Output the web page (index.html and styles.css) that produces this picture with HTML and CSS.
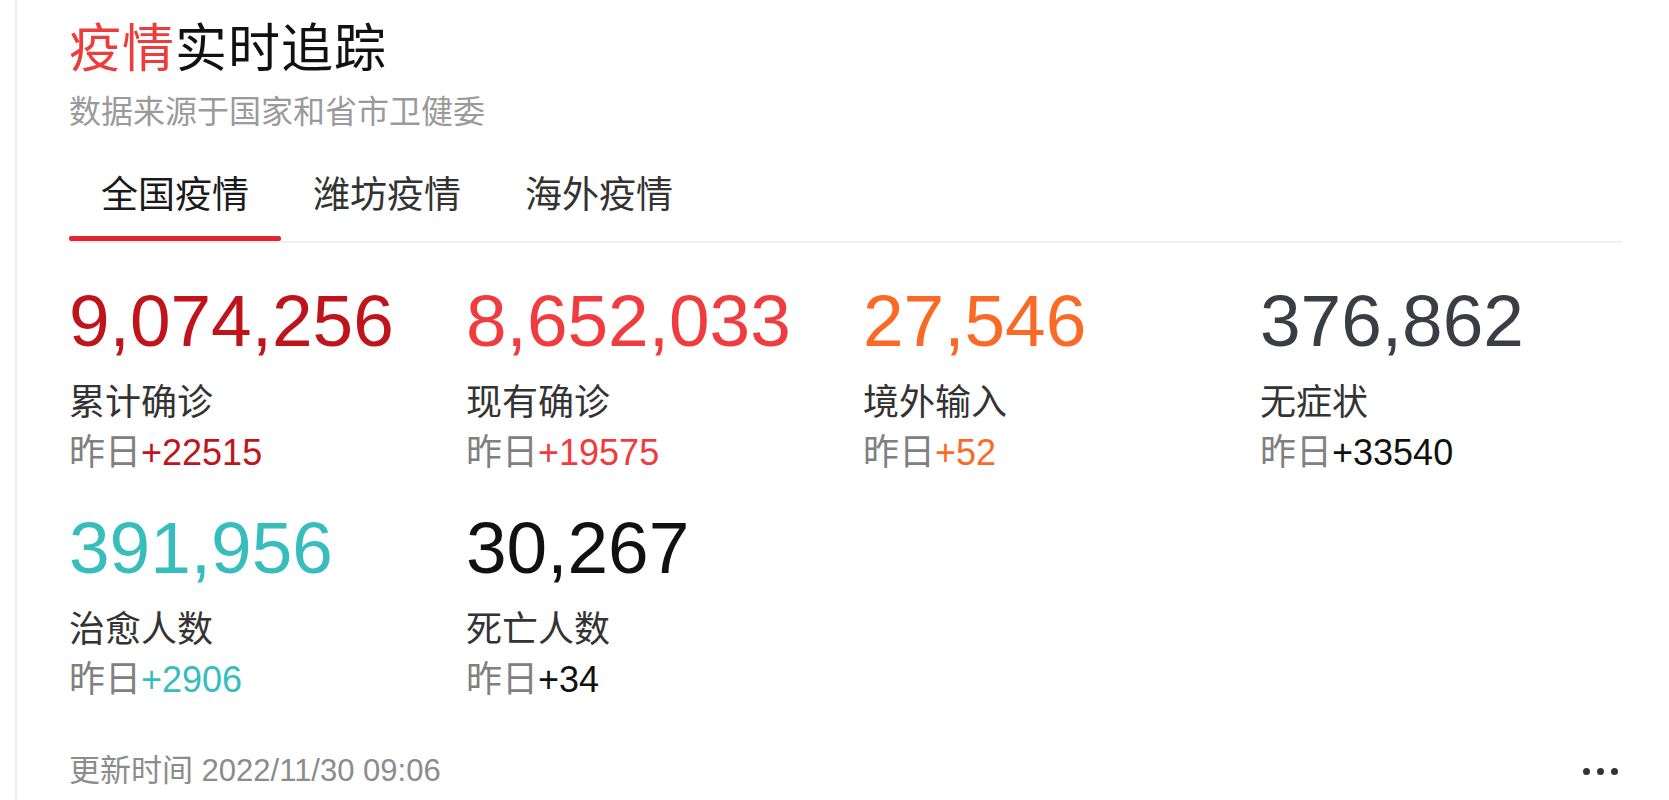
FILE: index.html
```html
<!DOCTYPE html>
<html lang="zh-CN">
<head>
<meta charset="utf-8">
<title>疫情实时追踪</title>
<link rel="stylesheet" href="styles.css">
</head>
<body>
<div class="page">
  <h1 class="title"><span class="hl">疫情</span>实时追踪</h1>
  <p class="subtitle">数据来源于国家和省市卫健委</p>
  <nav class="tabs">
    <a class="tab active">全国疫情</a>
    <a class="tab">潍坊疫情</a>
    <a class="tab">海外疫情</a>
  </nav>
  <div class="stats">
    <div class="stat c-total">
      <div class="num">9,074,256</div>
      <div class="label">累计确诊</div>
      <div class="delta">昨日<span class="inc">+22515</span></div>
    </div>
    <div class="stat c-current">
      <div class="num">8,652,033</div>
      <div class="label">现有确诊</div>
      <div class="delta">昨日<span class="inc">+19575</span></div>
    </div>
    <div class="stat c-import">
      <div class="num">27,546</div>
      <div class="label">境外输入</div>
      <div class="delta">昨日<span class="inc">+52</span></div>
    </div>
    <div class="stat c-asym">
      <div class="num">376,862</div>
      <div class="label">无症状</div>
      <div class="delta">昨日<span class="inc">+33540</span></div>
    </div>
    <div class="stat c-cured">
      <div class="num">391,956</div>
      <div class="label">治愈人数</div>
      <div class="delta">昨日<span class="inc">+2906</span></div>
    </div>
    <div class="stat c-dead">
      <div class="num">30,267</div>
      <div class="label">死亡人数</div>
      <div class="delta">昨日<span class="inc">+34</span></div>
    </div>
  </div>
  <div class="footer">
    <span class="updated">更新时间 2022/11/30 09:06</span>
    <span class="more"><i></i><i></i><i></i></span>
  </div>
</div>
</body>
</html>
```
FILE: styles.css
```css
html, body {
  margin: 0;
  padding: 0;
  background: #fff;
}

body {
  font-family: "Liberation Sans", "Noto Sans CJK SC", sans-serif;
  color: #333;
  overflow: hidden;
}

.page {
  margin-left: 15px;
  border-left: 2px solid #eeeeee;
  padding: 15px 47px 0 52px;
  height: 785px;
}

.title {
  margin: 0;
  font-family: "Noto Sans CJK SC", sans-serif;
  font-weight: 400;
  font-size: 52px;
  line-height: 60px;
  color: #111;
  letter-spacing: 1px;
}

.title .hl {
  color: #ee3b3b;
}

.subtitle {
  margin: 14px 0 0;
  font-family: "Noto Sans CJK SC", sans-serif;
  font-size: 32px;
  line-height: 40px;
  color: #9a9a9a;
}

.tabs {
  display: flex;
  margin-top: 38px;
  border-bottom: 2px solid #efefef;
}

.tab {
  position: relative;
  padding: 0 32px 24px;
  font-family: "Noto Sans CJK SC", sans-serif;
  font-size: 37px;
  line-height: 50px;
  color: #333;
}

.tab.active {
  color: #1a1a1a;
}

.tab.active::after {
  content: "";
  position: absolute;
  left: 0;
  right: 0;
  bottom: 0;
  height: 5px;
  border-radius: 2px;
  background: #e0262f;
}

.stats {
  display: grid;
  grid-template-columns: repeat(4, 397px);
  row-gap: 30px;
  margin-top: 38px;
}

.num {
  font-family: "Liberation Sans", sans-serif;
  font-size: 73px;
  line-height: 80px;
}

.label {
  margin-top: 13px;
  font-family: "Noto Sans CJK SC", sans-serif;
  font-size: 36px;
  line-height: 50px;
  color: #333;
}

.delta {
  font-family: "Noto Sans CJK SC", sans-serif;
  font-size: 36px;
  line-height: 50px;
  color: #808080;
}

.inc {
  font-family: "Liberation Sans", sans-serif;
}

.c-total .num, .c-total .inc { color: #c0141d; }
.c-current .num, .c-current .inc { color: #f03c3e; }
.c-import .num, .c-import .inc { color: #fa6a26; }
.c-asym .num { color: #3a3d44; }
.c-asym .inc { color: #111; }
.c-cured .num, .c-cured .inc { color: #38bdbd; }
.c-dead .num, .c-dead .inc { color: #111; }

.footer {
  display: flex;
  justify-content: space-between;
  align-items: center;
  margin-top: 46px;
}

.updated {
  font-family: "Liberation Sans", "Noto Sans CJK SC", sans-serif;
  font-size: 31px;
  line-height: 40px;
  color: #8c8c8c;
}

.more {
  display: flex;
  gap: 7px;
  margin-right: 4px;
}

.more i {
  display: block;
  width: 7px;
  height: 7px;
  border-radius: 50%;
  background: #333;
}
```
